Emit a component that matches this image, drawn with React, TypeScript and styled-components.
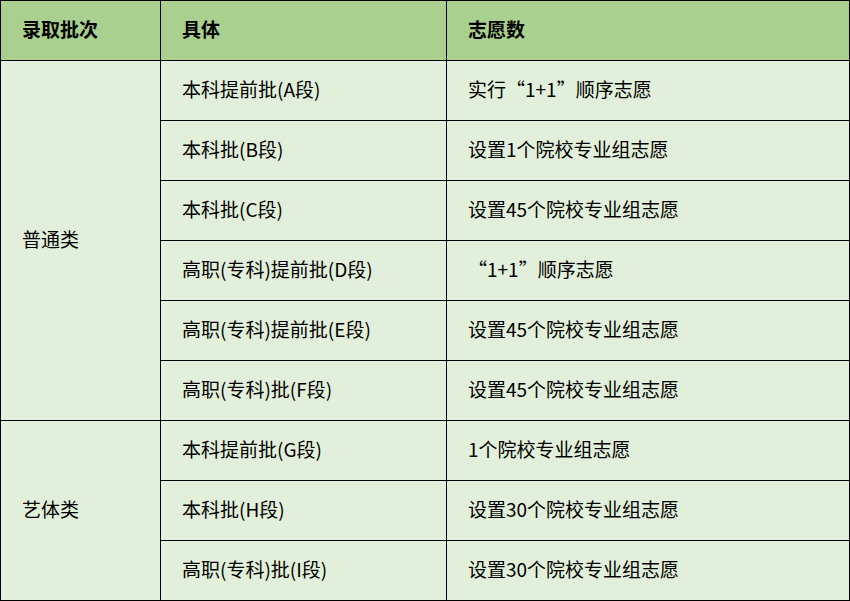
import styled, { createGlobalStyle } from 'styled-components';
import React from "react";

const Global = createGlobalStyle`
  html, body {
    margin: 0;
    padding: 0;
    background: #fff;
  }
  body {
    font-family: "Noto Sans CJK SC", "Noto Sans", sans-serif;
  }
`

type Row = { group?: string; span?: number; detail: string; count: string };

const rows: Row[] = [
  { group: '普通类', span: 6, detail: '本科提前批(A段)', count: '实行“1+1”顺序志愿' },
  { detail: '本科批(B段)', count: '设置1个院校专业组志愿' },
  { detail: '本科批(C段)', count: '设置45个院校专业组志愿' },
  { detail: '高职(专科)提前批(D段)', count: '“1+1”顺序志愿' },
  { detail: '高职(专科)提前批(E段)', count: '设置45个院校专业组志愿' },
  { detail: '高职(专科)批(F段)', count: '设置45个院校专业组志愿' },
  { group: '艺体类', span: 3, detail: '本科提前批(G段)', count: '1个院校专业组志愿' },
  { detail: '本科批(H段)', count: '设置30个院校专业组志愿' },
  { detail: '高职(专科)批(I段)', count: '设置30个院校专业组志愿' },
];

function App() {
  return (
    <>
      <Global />
      <Table lang="zh-CN">
        <colgroup>
          <col style={{ width: 160 }} />
          <col style={{ width: 286 }} />
          <col />
        </colgroup>
        <thead>
          <tr>
            <Head>录取批次</Head>
            <Head>具体</Head>
            <Head>志愿数</Head>
          </tr>
        </thead>
        <tbody>
          {rows.map((r, i) => (
            <tr key={i}>
              {r.group && <Cell rowSpan={r.span}>{r.group}</Cell>}
              <Cell>{r.detail}</Cell>
              <Cell>{r.count}</Cell>
            </tr>
          ))}
        </tbody>
      </Table>
    </>
  )
}

const Table = styled.table`
  width: 850px;
  border-collapse: collapse;
  table-layout: fixed;
  color: #000;
  font-size: 19px;
  line-height: 24px;
`

const Head = styled.th`
  height: 56px;
  padding: 0 0 3px 21px;
  border: 1px solid #000;
  background: #a9d08e;
  font-weight: 700;
  text-align: left;
  vertical-align: middle;
`

const Cell = styled.td`
  height: 56px;
  padding: 0 0 3px 21px;
  border: 1px solid #000;
  background: #e2efda;
  text-align: left;
  vertical-align: middle;
  white-space: nowrap;
`

export default App
